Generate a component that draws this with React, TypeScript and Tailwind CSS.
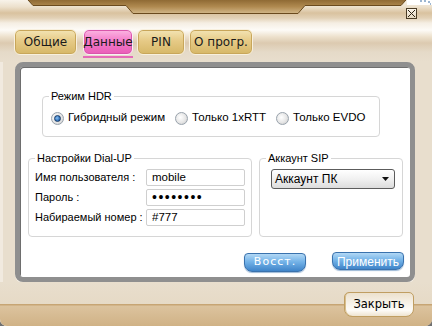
import React from "react";

const ui = { fontFamily: '"DejaVu Sans", Verdana, sans-serif' };
const tahoma = { fontFamily: '"Liberation Sans", Arial, sans-serif' };

function Tab({ label, active }: { label: string; active?: boolean }) {
  return (
    <div className="flex flex-col">
      <div
        className={
          active
            ? "flex h-[26px] items-center justify-center rounded-[6px] border border-[#fbeef6] bg-[linear-gradient(180deg,#fbb6e2_0%,#f47cca_45%,#ea5db8_100%)] text-[12px] text-[#1a1a1a] shadow-[inset_0_0_0_1px_#d955aa]"
            : "flex h-[26px] items-center justify-center rounded-[6px] border border-[#f8f0de] bg-[linear-gradient(180deg,#f3e4b4_0%,#e6ca86_45%,#d6b767_100%)] text-[12px] text-[#1a1a1a] shadow-[inset_0_0_0_1px_#c8a65a]"
        }
        style={ui}
      >
        {label}
      </div>
      {active && <span className="mt-[1px] h-[2px] bg-[#e46bb8]" />}
    </div>
  );
}

function Radio({ label, checked }: { label: string; checked?: boolean }) {
  return (
    <label className="flex items-center gap-[4px] whitespace-nowrap">
      <span className="flex h-[13px] w-[13px] items-center justify-center rounded-full border border-[#98a2ac] bg-[radial-gradient(circle_at_40%_40%,#ffffff_0%,#e6e6e6_55%,#c4c4c4_100%)]">
        {checked && (
          <span className="h-[7px] w-[7px] rounded-full border border-[#173a66] bg-[radial-gradient(circle_at_40%_40%,#8cc0f0_0%,#3a7cc4_55%,#1c4a86_100%)]" />
        )}
      </span>
      <span>{label}</span>
    </label>
  );
}

function Group({ title, className, children }: { title: string; className: string; children: React.ReactNode }) {
  return (
    <div className={"relative rounded-[4px] border border-[#d6d6d6] " + className}>
      <span className="absolute -top-[8px] left-[6px] whitespace-nowrap bg-white px-[2px] leading-[14px]">{title}</span>
      {children}
    </div>
  );
}

function Field({ value, type = "text" }: { value: string; type?: string }) {
  return (
    <input
      readOnly
      type={type}
      value={value}
      className={
        type === "password"
          ? "h-[17px] w-[99px] rounded-[2px] border border-[#cfcfcf] bg-white px-[5px] text-[14px] tracking-[1.5px] text-black outline-none"
          : "h-[17px] w-[99px] rounded-[2px] border border-[#cfcfcf] bg-white px-[5px] text-[11.5px] text-black outline-none"
      }
      style={tahoma}
    />
  );
}

export default function App() {
  return (
    <div className="h-[326px] w-[432px] bg-[#707070]">
      <div
        className="flex h-[326px] w-[432px] flex-col overflow-hidden rounded-b-[7px] bg-[#e8decd] shadow-[inset_3px_0_0_#f1eadf]"
        style={ui}
      >
        {/* header */}
        <div className="relative h-[62px] bg-[linear-gradient(180deg,#f8f3ea_0px,#ece0cc_7px,#d9c29f_13px,#e2d1b6_18px,#f5eee3_23px,#fdfbf7_30px,#ece0cb_37px,#dccab0_43px,#e5dac8_52px,#e8decd_62px)]">
          <svg className="absolute left-0 top-0" width="432" height="16" viewBox="0 0 432 16">
            <defs>
              <linearGradient id="brown" x1="0" y1="0" x2="0" y2="1">
                <stop offset="0" stopColor="#8f6a34" />
                <stop offset="0.5" stopColor="#b08a50" />
                <stop offset="1" stopColor="#d2b789" />
              </linearGradient>
            </defs>
            <path d="M28 0 L33 5.5 L126 5.5 L133 13.5 L298 13.5 L305 5.5 L401 5.5 L406 0 Z" fill="url(#brown)" />
            <path d="M28 0 L33 5.5 L126 5.5 L133 13.5 L298 13.5 L305 5.5 L401 5.5 L406 0" fill="none" stroke="#6a4a1e" strokeWidth="1" />
            <rect x="407" y="0" width="25" height="5" fill="#ffffff" />
            <path d="M420 1 h2 M424 1 h2 M428 2 h2 M430 4 h1" stroke="#3b6ea5" strokeWidth="1" />
          </svg>
          <button
            type="button"
            className="absolute right-[15px] top-[8px] flex h-[11px] w-[11px] items-center justify-center border border-[#4a3c26] bg-[linear-gradient(180deg,#fbf6ec,#e4d6bd)]"
          >
            <svg width="9" height="9" viewBox="0 0 9 9">
              <path d="M1 1 L8 8 M8 1 L1 8" stroke="#2d2416" strokeWidth="1" />
            </svg>
          </button>
          <div className="flex items-start gap-[4px] pl-[14px] pt-[29px]">
            <div className="mr-[2px] w-[63px]">
              <Tab label="Общие" />
            </div>
            <div className="w-[50px]">
              <Tab label="Данные" active />
            </div>
            <div className="w-[48px]">
              <Tab label="PIN" />
            </div>
            <div className="w-[64px]">
              <Tab label="О прогр." />
            </div>
          </div>
        </div>

        {/* panel */}
        <div className="ml-[15px] h-[220px] w-[400px] rounded-[8px] border-[5px] border-[#8f8f8f] bg-white shadow-[inset_1px_1px_0_#6e6e6e,0_1px_0_#f6f1e8]">
          <div className="flex h-full flex-col text-[11px] text-black" style={tahoma}>
            <Group title="Режим HDR" className="ml-[22px] mt-[29px] h-[41px] w-[338px]">
              <div className="flex h-full items-center gap-[10px] pl-[8px] pt-[3px] text-[11.5px]">
                <Radio label="Гибридный режим" checked />
                <Radio label="Только 1xRTT" />
                <Radio label="Только EVDO" />
              </div>
            </Group>

            <div className="ml-[8px] mt-[21px] flex gap-[7px]">
              <Group title="Настройки Dial-UP" className="h-[79px] w-[224px]">
                <div className="flex flex-col gap-[3px] pl-[6px] pr-[6px] pt-[10px]">
                  <div className="flex h-[17px] items-center justify-between whitespace-nowrap">
                    <span>Имя пользователя :</span>
                    <Field value="mobile" />
                  </div>
                  <div className="flex h-[17px] items-center justify-between whitespace-nowrap">
                    <span>Пароль :</span>
                    <Field value="12345678" type="password" />
                  </div>
                  <div className="flex h-[17px] items-center justify-between whitespace-nowrap">
                    <span>Набираемый номер :</span>
                    <Field value="#777" />
                  </div>
                </div>
              </Group>
              <Group title="Аккаунт SIP" className="h-[79px] w-[144px]">
                <div className="pl-[11px] pt-[10px]">
                  <div className="flex h-[20px] w-[124px] items-center justify-between rounded-[3px] border border-[#5c5c5c] bg-[linear-gradient(180deg,#ffffff_0%,#f1f1f1_50%,#dcdcdc_100%)] pl-[3px] pr-[5px] text-[12px]">
                    <span>Аккаунт ПК</span>
                    <svg width="7" height="4" viewBox="0 0 7 4">
                      <path d="M0 0 H7 L3.5 4 Z" fill="#111" />
                    </svg>
                  </div>
                </div>
              </Group>
            </div>

            <div className="mt-[15px] flex items-start justify-end gap-[26px] pr-[6px]">
              <button
                type="button"
                className="mt-[1px] h-[19px] w-[62px] rounded-t-[4px] rounded-b-[8px] border border-[#3a72ad] bg-[linear-gradient(180deg,#b2d8f5_0%,#74b3e8_45%,#3f84c9_100%)] text-[11px] tracking-[1px] text-white shadow-[0_1px_1px_#9cb8d6]"
                style={ui}
              >
                Восст.
              </button>
              <button
                type="button"
                className="h-[18px] w-[72px] rounded-t-[4px] rounded-b-[8px] border border-[#3a72ad] bg-[linear-gradient(180deg,#b2d8f5_0%,#74b3e8_45%,#3f84c9_100%)] text-[12px] text-white shadow-[0_1px_1px_#9cb8d6]"
              >
                Применить
              </button>
            </div>
          </div>
        </div>

        {/* footer */}
        <div className="flex h-[44px] justify-end bg-[linear-gradient(180deg,#e8decd_0px,#e6dac6_22px,#c7a574_22px,#c7a574_23px,#dcc39e_24px,#d0b286_44px)] pr-[18px] pt-[10px]">
          <button
            type="button"
            className="h-[25px] w-[70px] rounded-t-[5px] rounded-b-[8px] border border-[#c09e62] bg-[linear-gradient(180deg,#ece1cd_0%,#f7f2e9_45%,#fdfbf7_75%,#efe4d1_100%)] text-[11.5px] text-black shadow-[inset_1px_0_0_#d8bf8e]"
          >
            Закрыть
          </button>
        </div>
      </div>
    </div>
  );
}
